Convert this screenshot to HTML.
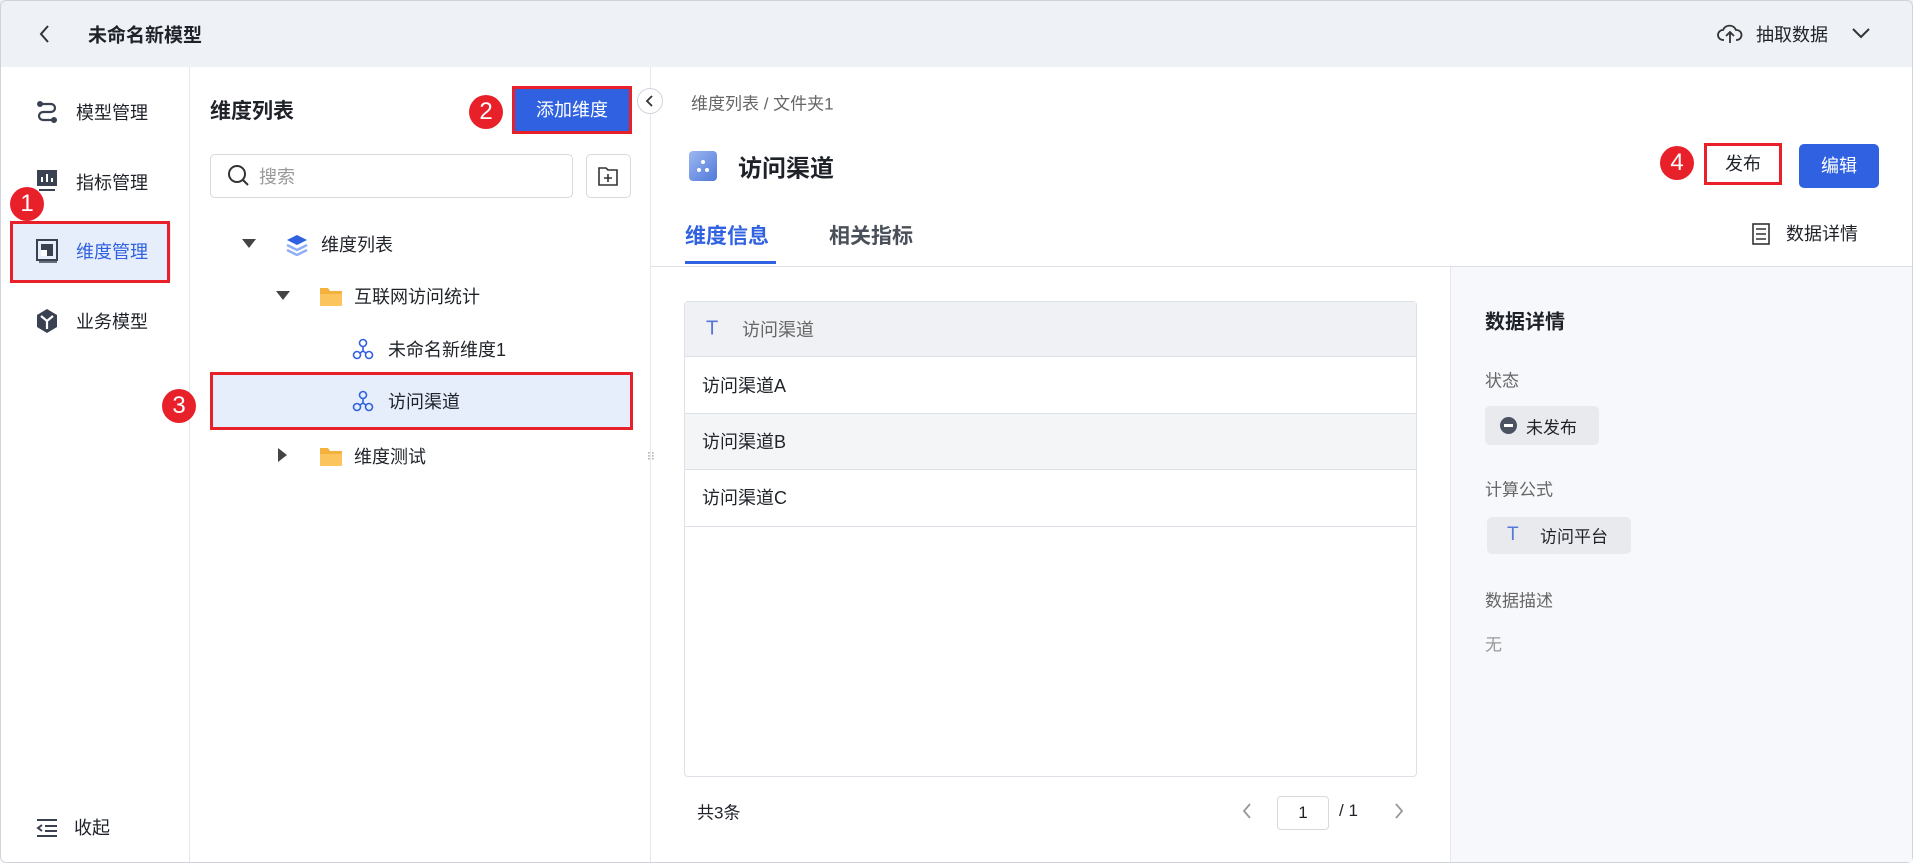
<!DOCTYPE html>
<html><head><meta charset="utf-8"><style>
*{box-sizing:border-box;margin:0;padding:0}
body{width:1913px;height:863px;overflow:hidden;background:#fff;font-family:"Liberation Sans","Noto Sans CJK SC",sans-serif;color:#1f2329;position:relative;font-size:18px}
.a{position:absolute;white-space:nowrap}
.hdr{left:0;top:0;width:1913px;height:67px;background:#eef1f6}
.red{border:3px solid #e8202a}
.circ{width:34px;height:34px;border-radius:50%;background:#e8202a;color:#fff;font-size:24px;text-align:center;line-height:34px}
.v{transform:translateY(-50%)}
</style></head><body>
<div class="a hdr"></div>
<svg class="a" style="left:38px;top:24px" width="14" height="20"><path d="M10 2 L3 10 L10 18" stroke="#333" stroke-width="2" fill="none"/></svg>
<div class="a v" style="left:88px;top:34px;font-size:19px;font-weight:bold">未命名新模型</div>
<svg class="a" style="left:1717px;top:23px" width="26" height="22" viewBox="0 0 26 22"><path d="M7 17H6a5 5 0 0 1 0-10 7 7 0 0 1 13 0 5 5 0 0 1 1 10h-1M13 20V10M9 13l4-4 4 4" stroke="#333" stroke-width="1.8" fill="none"/></svg>
<div class="a v" style="left:1756px;top:34px;font-size:18px">抽取数据</div>
<svg class="a" style="left:1851px;top:26px" width="20" height="14"><path d="M2 3l8 8 8-8" stroke="#333" stroke-width="2" fill="none"/></svg>
<!-- borders -->
<div class="a" style="left:189px;top:67px;width:1px;height:796px;background:#e4e7ec"></div>
<div class="a" style="left:650px;top:67px;width:1px;height:796px;background:#e4e7ec"></div>
<div class="a" style="left:0;top:0;width:1913px;height:863px;border:1px solid #d0d4da;border-radius:6px"></div>
<!-- left nav -->
<svg class="a" style="left:35px;top:100px" width="24" height="24" viewBox="0 0 24 24"><path d="M5 4h11a4 4 0 0 1 0 8H8a4 4 0 0 0 0 8h11" stroke="#3a4150" stroke-width="2.2" fill="none"/><circle cx="5" cy="4" r="3" fill="#3a4150"/><circle cx="19" cy="20" r="3" fill="#3a4150"/></svg>
<div class="a v" style="left:76px;top:112px">模型管理</div>
<svg class="a" style="left:36px;top:169px" width="22" height="24"><rect x="1" y="1" width="20" height="16" fill="#3a4150"/><path d="M6 13V8M11 13V5M16 13V9" stroke="#fff" stroke-width="2"/><path d="M3 21h16" stroke="#3a4150" stroke-width="2"/></svg>
<div class="a v" style="left:76px;top:182px">指标管理</div>
<div class="a" style="left:12px;top:222px;width:159px;height:59px;background:#e6eefc"></div>
<div class="a red" style="left:10px;top:221px;width:160px;height:62px"></div>
<svg class="a" style="left:36px;top:239px" width="22" height="24"><rect x="1" y="1" width="20" height="20" fill="none" stroke="#3a4150" stroke-width="2"/><rect x="5" y="5" width="12" height="12" fill="#3a4150"/><rect x="5" y="11" width="6" height="6" fill="#fff"/><path d="M3 23h18" stroke="#3a4150" stroke-width="1.5"/></svg>
<div class="a v" style="left:76px;top:251px;color:#3061e0">维度管理</div>
<div class="a circ" style="left:10px;top:187px">1</div>
<svg class="a" style="left:36px;top:308px" width="22" height="26" viewBox="0 0 22 26"><path d="M11 1l10 6v12l-10 6-10-6V7z" fill="#3a4150"/><path d="M5 8l6 5 6-5M11 13v8" stroke="#fff" stroke-width="2.2" fill="none"/></svg>
<div class="a v" style="left:76px;top:321px">业务模型</div>
<svg class="a" style="left:36px;top:818px" width="22" height="20"><path d="M1 2h20M9 8h12M9 13h12M1 18h20M6 7l-4 3 4 3" stroke="#3a4150" stroke-width="2" fill="none"/></svg>
<div class="a v" style="left:74px;top:827px">收起</div>
<!-- tree panel -->
<div class="a v" style="left:210px;top:110px;font-size:21px;font-weight:bold">维度列表</div>
<div class="a circ" style="left:469px;top:95px">2</div>
<div class="a" style="left:512px;top:86px;width:120px;height:48px;background:#3061e0;border:3px solid #e8202a;color:#fff;font-size:18px;text-align:center;line-height:42px">添加维度</div>
<div class="a" style="left:637px;top:88px;width:26px;height:26px;border-radius:50%;background:#fff;border:1px solid #d0d4da"></div>
<svg class="a" style="left:644px;top:94px" width="12" height="14"><path d="M8 2L3 7l5 5" stroke="#333" stroke-width="1.8" fill="none"/></svg>
<div class="a" style="left:210px;top:154px;width:363px;height:44px;border:1px solid #d6d9de;border-radius:5px"></div>
<svg class="a" style="left:227px;top:164px" width="24" height="24"><circle cx="10" cy="10" r="8" stroke="#333" stroke-width="2" fill="none"/><path d="M16 16l5 5" stroke="#333" stroke-width="2"/></svg>
<div class="a v" style="left:259px;top:176px;color:#999">搜索</div>
<div class="a" style="left:586px;top:154px;width:45px;height:44px;border:1px solid #d6d9de;border-radius:5px"></div>
<svg class="a" style="left:597px;top:165px" width="22" height="22"><path d="M2 3h7l2 2h9v15H2z" stroke="#333" stroke-width="1.6" fill="none"/><path d="M11 9v8M7 13h8" stroke="#333" stroke-width="1.6"/></svg>
<svg class="a" style="left:242px;top:239px" width="14" height="10"><path d="M0 0h14L7 9z" fill="#444"/></svg>
<svg class="a" style="left:286px;top:234px" width="22" height="22"><path d="M11 1l10 5-10 5-10-5z" fill="#3061e0"/><path d="M1 11l10 5 10-5M1 16l10 5 10-5" stroke="#8fb0f5" stroke-width="2.5" fill="none"/></svg>
<div class="a v" style="left:321px;top:244px">维度列表</div>
<svg class="a" style="left:276px;top:291px" width="14" height="10"><path d="M0 0h14L7 9z" fill="#444"/></svg>
<svg class="a" style="left:319px;top:285px" width="24" height="22"><path d="M1 3h8l2 3h12v15H1z" fill="#f5b13d"/><path d="M1 9h22v12H1z" fill="#fbc45c"/></svg>
<div class="a v" style="left:354px;top:296px">互联网访问统计</div>
<svg class="a" style="left:352px;top:338px" width="22" height="22" viewBox="0 0 22 22"><circle cx="11" cy="5" r="3.5" stroke="#3061e0" stroke-width="1.6" fill="none"/><circle cx="5" cy="17" r="3.5" stroke="#3061e0" stroke-width="1.6" fill="none"/><circle cx="17" cy="17" r="3.5" stroke="#3061e0" stroke-width="1.6" fill="none"/><path d="M11 9v4M8 15l3-2 3 2" stroke="#3061e0" stroke-width="1.6" fill="none"/></svg>
<div class="a v" style="left:388px;top:349px">未命名新维度1</div>
<div class="a" style="left:212px;top:373px;width:420px;height:56px;background:#e6eefc"></div>
<div class="a red" style="left:210px;top:372px;width:423px;height:58px"></div>
<svg class="a" style="left:352px;top:390px" width="22" height="22" viewBox="0 0 22 22"><circle cx="11" cy="5" r="3.5" stroke="#3061e0" stroke-width="1.6" fill="none"/><circle cx="5" cy="17" r="3.5" stroke="#3061e0" stroke-width="1.6" fill="none"/><circle cx="17" cy="17" r="3.5" stroke="#3061e0" stroke-width="1.6" fill="none"/><path d="M11 9v4M8 15l3-2 3 2" stroke="#3061e0" stroke-width="1.6" fill="none"/></svg>
<div class="a v" style="left:388px;top:401px">访问渠道</div>
<div class="a circ" style="left:162px;top:389px">3</div>
<svg class="a" style="left:278px;top:448px" width="10" height="14"><path d="M0 0v14l9-7z" fill="#444"/></svg>
<svg class="a" style="left:319px;top:445px" width="24" height="22"><path d="M1 3h8l2 3h12v15H1z" fill="#f5b13d"/><path d="M1 9h22v12H1z" fill="#fbc45c"/></svg>
<div class="a v" style="left:354px;top:456px">维度测试</div>
<div class="a" style="left:647px;top:453px;color:#999;font-size:12px;line-height:6px">⁝⁝</div>
<!-- right -->
<div class="a v" style="left:691px;top:102px;color:#666;font-size:17px">维度列表 / 文件夹1</div>
<div class="a" style="left:689px;top:151px;width:28px;height:30px;border-radius:4px;background:linear-gradient(135deg,#9db8f2,#4f78d8)"></div>
<svg class="a" style="left:695px;top:158px" width="16" height="16"><circle cx="8" cy="4" r="2" fill="#fff"/><circle cx="4" cy="12" r="2" fill="#fff"/><circle cx="12" cy="12" r="2" fill="#fff"/></svg>
<div class="a v" style="left:738px;top:166px;font-size:24px;font-weight:bold">访问渠道</div>
<div class="a circ" style="left:1660px;top:146px">4</div>
<div class="a" style="left:1704px;top:143px;width:78px;height:42px;border:3px solid #e8202a;text-align:center;line-height:36px;font-size:18px;background:#fff">发布</div>
<div class="a" style="left:1799px;top:144px;width:80px;height:44px;border-radius:5px;background:#3061e0;color:#fff;text-align:center;line-height:44px">编辑</div>
<div class="a v" style="left:685px;top:235px;font-size:21px;font-weight:bold;color:#3061e0">维度信息</div>
<div class="a" style="left:685px;top:261px;width:91px;height:3px;background:#3061e0"></div>
<div class="a v" style="left:829px;top:235px;font-size:21px;font-weight:bold;color:#4a505a">相关指标</div>
<svg class="a" style="left:1752px;top:223px" width="18" height="22"><rect x="1" y="1" width="16" height="20" fill="none" stroke="#333" stroke-width="1.6"/><path d="M4 6h10M4 11h10M4 16h10" stroke="#333" stroke-width="1.4"/></svg>
<div class="a v" style="left:1786px;top:233px;font-size:18px">数据详情</div>
<div class="a" style="left:651px;top:266px;width:1262px;height:1px;background:#dde0e6"></div>
<div class="a" style="left:1450px;top:267px;width:462px;height:595px;background:#f7f8fb;border-left:1px solid #e4e7ec"></div>
<div class="a" style="left:684px;top:301px;width:733px;height:476px;border:1px solid #dde0e6;border-radius:4px"></div>
<div class="a" style="left:685px;top:302px;width:731px;height:55px;background:#eff1f4;border-bottom:1px solid #dde0e6"></div>
<div class="a v" style="left:706px;top:329px;color:#5677d6;font-size:20px">T</div>
<div class="a v" style="left:742px;top:329px;color:#666">访问渠道</div>
<div class="a" style="left:685px;top:413px;width:731px;height:57px;background:#f4f5f7;border-top:1px solid #dde0e6;border-bottom:1px solid #dde0e6"></div>
<div class="a" style="left:685px;top:526px;width:731px;height:1px;background:#dde0e6"></div>
<div class="a v" style="left:702px;top:385px">访问渠道A</div>
<div class="a v" style="left:702px;top:441px">访问渠道B</div>
<div class="a v" style="left:702px;top:497px">访问渠道C</div>
<div class="a v" style="left:697px;top:811px;font-size:17px">共3条</div>
<svg class="a" style="left:1241px;top:802px" width="12" height="18"><path d="M9 2L3 9l6 7" stroke="#999" stroke-width="1.8" fill="none"/></svg>
<div class="a" style="left:1277px;top:796px;width:52px;height:34px;border:1px solid #d6d9de;border-radius:4px;text-align:center;line-height:32px;font-size:17px">1</div>
<div class="a v" style="left:1339px;top:811px;font-size:17px">/ 1</div>
<svg class="a" style="left:1393px;top:802px" width="12" height="18"><path d="M3 2l6 7-6 7" stroke="#999" stroke-width="1.8" fill="none"/></svg>
<div class="a v" style="left:1485px;top:320px;font-size:20px;font-weight:bold">数据详情</div>
<div class="a v" style="left:1485px;top:379px;color:#666;font-size:17px">状态</div>
<div class="a" style="left:1485px;top:406px;width:114px;height:39px;border-radius:5px;background:#e8eaee"></div>
<div class="a" style="left:1500px;top:417px;width:17px;height:17px;border-radius:50%;background:#4b5260"></div>
<div class="a" style="left:1504px;top:424px;width:9px;height:3px;background:#fff"></div>
<div class="a v" style="left:1526px;top:426px;font-size:17px">未发布</div>
<div class="a v" style="left:1485px;top:488px;color:#666;font-size:17px">计算公式</div>
<div class="a" style="left:1487px;top:517px;width:144px;height:37px;border-radius:5px;background:#e8eaee"></div>
<div class="a v" style="left:1507px;top:535px;color:#5677d6;font-size:19px">T</div>
<div class="a v" style="left:1540px;top:535px;font-size:17px">访问平台</div>
<div class="a v" style="left:1485px;top:599px;color:#666;font-size:17px">数据描述</div>
<div class="a v" style="left:1485px;top:643px;color:#999;font-size:17px">无</div>
</body></html>
